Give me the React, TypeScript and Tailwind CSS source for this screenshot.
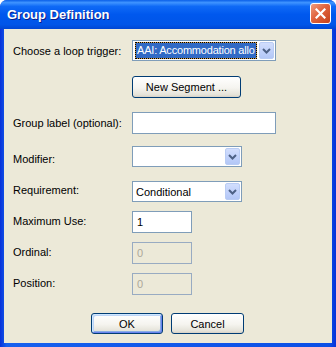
import React from 'react'

const font = "font-['Liberation_Sans',Arial,sans-serif]"

function Chevron() {
  return (
    <svg width="9" height="6" viewBox="0 0 9 6">
      <polyline points="1,1 4.5,4.5 8,1" fill="none" stroke="#4D6185" strokeWidth="2" />
    </svg>
  )
}

function DropButton() {
  return (
    <div className="w-[15px] my-px mr-px rounded-[2px] border border-[#B9CCF4] bg-[linear-gradient(180deg,#D2DEFD,#BFD0FA_60%,#B3C7F6)] flex items-center justify-center">
      <Chevron />
    </div>
  )
}

function Combo({ width, value, focused }: { width: string; value?: string; focused?: boolean }) {
  return (
    <div className={`${width} h-[21px] flex border border-[#7F9DB9] bg-white`}>
      {focused ? (
        <div className="flex-1 min-w-0 my-px ml-[2px] mr-[2px] border border-dotted border-black bg-[#D09B45]">
          <div className="h-full bg-[#316AC5] text-white text-[11px] leading-[15px] tracking-[-0.2px] whitespace-nowrap pl-px">
            {value}
          </div>
        </div>
      ) : (
        <div className="flex-1 min-w-0 flex items-center pl-[3px] text-[11px] whitespace-nowrap">
          {value}
        </div>
      )}
      <DropButton />
    </div>
  )
}

function Field({ width, value, disabled }: { width: string; value?: string; disabled?: boolean }) {
  return (
    <div
      className={`${width} h-[22px] flex items-center pl-[4px] text-[11px] border ${
        disabled ? 'border-[#98ABC2] bg-[#ECE9D8] text-[#ACA899]' : 'border-[#7F9DB9] bg-white text-black'
      }`}
    >
      {value}
    </div>
  )
}

function XpButton({ label, size, isDefault }: { label: string; size: string; isDefault?: boolean }) {
  return (
    <button
      className={`${size} rounded-[3px] border border-[#003C74] text-[11px] text-black bg-[linear-gradient(180deg,#FFFFFF,#F5F4EF_55%,#E4E2D8_90%,#D6D0C5)] ${
        isDefault
          ? 'shadow-[inset_1px_1px_0_#CEE7FF,inset_-1px_-1px_0_#6982EE,inset_2px_2px_0_#BCD4F6,inset_-2px_-2px_0_#89ADE4]'
          : ''
      }`}
    >
      {label}
    </button>
  )
}

function Row({ label, children, className = '', labelClass = '' }: { label: string; children: React.ReactNode; className?: string; labelClass?: string }) {
  return (
    <div className={`flex items-center ${className}`}>
      <div className={`w-[119px] text-[11px] text-black ${labelClass}`}>{label}</div>
      {children}
    </div>
  )
}

export default function App() {
  return (
    <div className={`w-[336px] h-[347px] flex flex-col rounded-t-[7px] overflow-hidden bg-[linear-gradient(90deg,#0831D9,#1660EE_2%,#0B4FE6_98%,#0831D9)] ${font}`}>
      <div className="h-[29px] flex items-center justify-between pl-[7px] pr-[5px] bg-[linear-gradient(180deg,#0A5FE8_0%,#3F94FF_9%,#0F6AF6_22%,#0058EE_50%,#0055E8_85%,#0046D3_100%)]">
        <span className="text-white font-bold text-[13px] pt-px [text-shadow:1px_1px_0_#0A1E8A]">Group Definition</span>
        <div className="w-[21px] h-[21px] mb-[3px] rounded-[3px] border border-white bg-[linear-gradient(135deg,#EE9C7E,#E0633D_45%,#C5411B)] flex items-center justify-center">
          <svg width="11" height="11" viewBox="0 0 11 11">
            <path d="M1.5 1.5 L9.5 9.5 M9.5 1.5 L1.5 9.5" stroke="white" strokeWidth="2.2" strokeLinecap="square" />
          </svg>
        </div>
      </div>
      <div className="flex-1 mx-[4px] mb-[4px] bg-[#ECE9D8] pl-[9px] pt-[11px] flex flex-col">
        <Row label="Choose a loop trigger:" labelClass="mt-[2px]">
          <Combo width="w-[144px]" value="AAI: Accommodation allo" focused />
        </Row>
        <div className="mt-[13px] pl-[119px]">
          <XpButton label="New Segment ..." size="w-[109px] h-[22px]" />
        </div>
        <Row label="Group label (optional):" className="mt-[14px]">
          <Field width="w-[144px]" />
        </Row>
        <Row label="Modifier:" className="mt-[12px]" labelClass="mt-[4px]">
          <Combo width="w-[110px]" />
        </Row>
        <Row label="Requirement:" className="mt-[14px]" labelClass="-mt-[4px]">
          <Combo width="w-[110px]" value="Conditional" />
        </Row>
        <Row label="Maximum Use:" className="mt-[9px]" labelClass="-mt-[2px]">
          <Field width="w-[60px]" value="1" />
        </Row>
        <Row label="Ordinal:" className="mt-[9px]" labelClass="-mt-[3px]">
          <Field width="w-[60px]" value="0" disabled />
        </Row>
        <Row label="Position:" className="mt-[9px]" labelClass="-mt-[3px]">
          <Field width="w-[60px]" value="0" disabled />
        </Row>
        <div className="mt-[18px] flex gap-[8px] pl-[78px]">
          <XpButton label="OK" size="w-[72px] h-[21px]" isDefault />
          <XpButton label="Cancel" size="w-[73px] h-[21px]" />
        </div>
      </div>
    </div>
  )
}
